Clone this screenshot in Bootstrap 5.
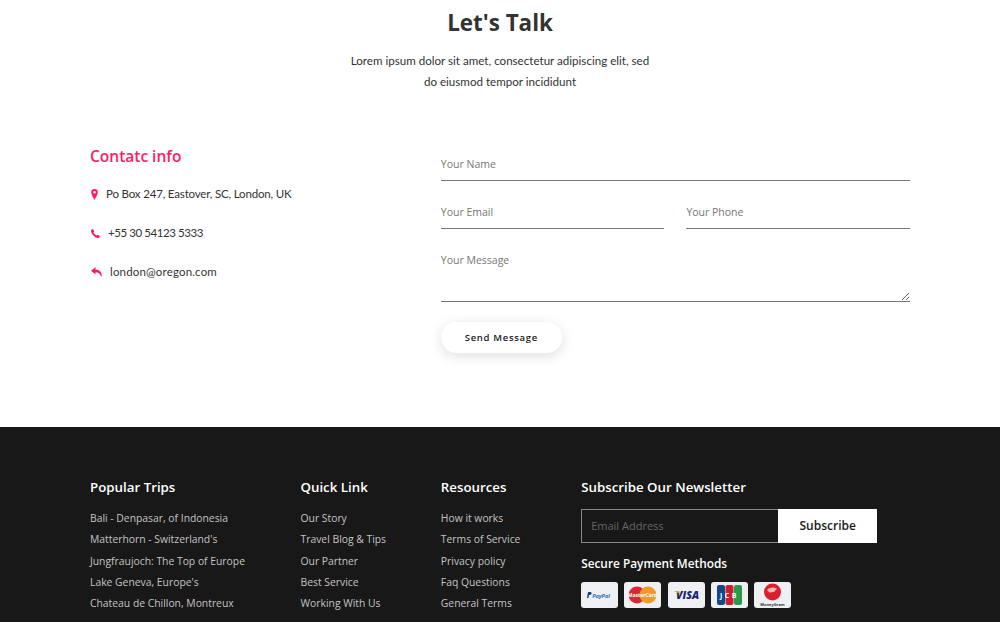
<!DOCTYPE html>
<html lang="en">
<head>
  <meta charset="UTF-8" />
  <title>Let's Talk</title>
  <link href="https://cdn.jsdelivr.net/npm/bootstrap@5.3.3/dist/css/bootstrap.min.css" rel="stylesheet" />
  <script src="https://cdn.jsdelivr.net/npm/bootstrap@5.3.3/dist/js/bootstrap.bundle.min.js"></script>
  <style>
    html, body { height: 622px; overflow: hidden; }
    body { font-family: "Open Sans", "Liberation Sans", sans-serif; color: #333; background: #fff; }
    .wrap-main { width: 842px; margin: 0 auto; padding: 0 11px; }
    .wrap-main .row { --bs-gutter-x: 22px; }
    .talk-head { padding-top: 6px; height: 147px; text-align: center; }
    .talk-head h2 { font-size: 22.4px; font-weight: 700; line-height: 34px; margin: 0 0 11px; color: #333; }
    .talk-head p { font-family: Lato, sans-serif; font-size: 11.6px; line-height: 20.6px; width: 305px; margin: 0 auto; color: #333; }
    .contact-zone { height: 280px; }
    .contact-title { font-size: 15.5px; font-weight: 600; color: #ff1a66; line-height: 18px; margin: 0 0 20px; }
    .contact-line { display: flex; align-items: center; padding-left: 1px; font-family: Lato, sans-serif; font-size: 11.5px; line-height: 18px; height: 18px; margin-bottom: 21px; color: #333; }
    .contact-line svg { flex: none; fill: #ff1a66; }
    .addr-text { letter-spacing: -.17px; }
    .phone-num { letter-spacing: -.42px; }
    .mail-text { letter-spacing: .17px; }
    .line-field { display: block; width: 100%; border: 0; border-bottom: 1px solid #777; border-radius: 0; padding: 0; height: 34px; background: transparent; font-size: 10.5px; color: #333; outline: 0; }
    .line-field::placeholder { color: #777; }
    textarea.line-field { height: 59px; padding-top: 7px; line-height: 20px; }
    .input-box { height: 48px; }
    .send-btn { width: 121px; height: 31px; margin-top: 20px; padding: 8px 0 6px; border: 0; border-radius: 16px; background: #fff; box-shadow: 0 3px 14px rgba(0,0,0,.13); font-size: 9.5px; font-weight: 600; letter-spacing: .7px; color: #222; }
    .foot-zone { height: 195px; background: #181818; padding-top: 50px; }
    .foot-title { font-size: 13.3px; font-weight: 600; color: #fff; line-height: 20px; margin: 0 0 11px; }
    .foot-links { list-style: none; margin: 0; padding: 0; }
    .foot-links li { font-size: 10.35px; line-height: 21.3px; color: #c4c4c4; white-space: nowrap; }
    .news-form { display: flex; width: 296px; height: 34px; margin-top: 12px; }
    .news-form input { width: 197px; border: 1px solid #888; border-right: 0; background: #181818; padding: 0 9px; font-size: 11px; outline: 0; color: #fff; }
    .news-form input::placeholder { color: #666; }
    .news-form button { width: 99px; border: 0; background: #fff; color: #181818; font-size: 12px; font-weight: 600; }
    .pay-title { font-size: 11.85px; font-weight: 600; color: #fff; line-height: 18px; margin: 11px 0 10px; }
    .pay-row { gap: 6.3px; }
    .pay-card { width: 37px; height: 26px; background: #eef0f4; border-radius: 3px; display: block; }
  </style>
</head>
<body>

<section class="talk-head">
  <h2>Let's Talk</h2>
  <p>Lorem ipsum dolor sit amet, consectetur adipiscing elit, sed do eiusmod tempor incididunt</p>
</section>

<section class="contact-zone">
  <div class="wrap-main">
    <div class="row">
      <div class="col-5">
        <h5 class="contact-title">Contatc info</h5>
        <div class="contact-line">
          <svg width="7" height="11" viewBox="0 0 12 20" class="me-2"><path fill-rule="evenodd" d="M6 0a6 6 0 0 0-6 6c0 4 6 14 6 14s6-10 6-14a6 6 0 0 0-6-6zm0 3.6a2.4 2.4 0 1 1 0 4.8 2.4 2.4 0 0 1 0-4.8z"/></svg>
          <span class="addr-text">Po Box 247, Eastover, SC, London, UK</span>
        </div>
        <div class="contact-line">
          <svg width="9" height="9" viewBox="0 0 20 20" class="me-2"><path d="M4.5 0 7.5 5.5 5.5 8c1.4 3 3.5 5 6.5 6.5l2.5-2 5.5 3-1.5 3.5c-.6 1-2 1-3 1C8 19 1 12 0 4.5c0-1 .2-2 1-2.8z"/></svg>
          <span class="phone-num">+55 30 54123 5333</span>
        </div>
        <div class="contact-line">
          <svg width="11" height="10" viewBox="0 0 22 20" class="me-2"><path d="M9 0 0 7.5 9 15v-4.5c5.5 0 8.5 1.5 10 6.5.6 1 1.4 2 2 3 1.5-7-1.5-14.5-12-15z"/></svg>
          <span class="mail-text">london@oregon.com</span>
        </div>
      </div>
      <div class="col-7">
        <form>
          <div class="input-box"><input class="line-field" type="text" placeholder="Your Name" /></div>
          <div class="row">
            <div class="col-6 input-box"><input class="line-field" type="text" placeholder="Your Email" /></div>
            <div class="col-6 input-box"><input class="line-field" type="text" placeholder="Your Phone" /></div>
          </div>
          <textarea class="line-field" placeholder="Your Message"></textarea>
          <button type="button" class="btn send-btn">Send Message</button>
        </form>
      </div>
    </div>
  </div>
</section>

<footer class="foot-zone">
  <div class="wrap-main">
    <div class="row">
      <div class="col-3">
        <h6 class="foot-title">Popular Trips</h6>
        <ul class="foot-links">
          <li>Bali - Denpasar, of Indonesia</li>
          <li>Matterhorn - Switzerland's</li>
          <li>Jungfraujoch: The Top of Europe</li>
          <li>Lake Geneva, Europe's</li>
          <li>Chateau de Chillon, Montreux</li>
        </ul>
      </div>
      <div class="col-2">
        <h6 class="foot-title">Quick Link</h6>
        <ul class="foot-links">
          <li>Our Story</li>
          <li>Travel Blog &amp; Tips</li>
          <li>Our Partner</li>
          <li>Best Service</li>
          <li>Working With Us</li>
        </ul>
      </div>
      <div class="col-2">
        <h6 class="foot-title">Resources</h6>
        <ul class="foot-links">
          <li>How it works</li>
          <li>Terms of Service</li>
          <li>Privacy policy</li>
          <li>Faq Questions</li>
          <li>General Terms</li>
        </ul>
      </div>
      <div class="col-5">
        <h6 class="foot-title">Subscribe Our Newsletter</h6>
        <div class="news-form">
          <input type="text" placeholder="Email Address" />
          <button type="button">Subscribe</button>
        </div>
        <h6 class="pay-title">Secure Payment Methods</h6>
        <div class="d-flex pay-row">
          <svg class="pay-card" viewBox="0 0 37 26"><text x="20" y="15.5" text-anchor="middle" font-family="Open Sans" font-size="5.5" font-weight="700" font-style="italic" fill="#2a6fb5">PayPal</text><path d="M7 10h2.5c1.500 0 1.500 3-.5 3H8l-.5 3H6z" fill="#1c3f80"/></svg>
          <svg class="pay-card" viewBox="0 0 37 26"><circle cx="13" cy="13" r="8.5" fill="#dc2535"/><circle cx="24" cy="13" r="8.5" fill="#f39a26"/><text x="18.5" y="15" text-anchor="middle" font-family="Open Sans" font-size="5" font-weight="700" fill="#fff">MasterCard</text></svg>
          <svg class="pay-card" viewBox="0 0 37 26"><text x="19.5" y="17" text-anchor="middle" font-family="Open Sans" font-size="10.5" font-weight="800" font-style="italic" fill="#1a2470">VISA</text><path d="M6 9h5l1.5 3z" fill="#e9a22b"/></svg>
          <svg class="pay-card" viewBox="0 0 37 26"><rect x="6" y="3" width="8" height="20" rx="2" fill="#12478c"/><rect x="14.5" y="3" width="8" height="20" rx="2" fill="#c8202f"/><rect x="23" y="3" width="8" height="20" rx="2" fill="#2a9a48"/><text x="18.5" y="16" text-anchor="middle" font-family="Open Sans" font-size="7" font-weight="700" fill="#fff" letter-spacing="2.5">JCB</text></svg>
          <svg class="pay-card" viewBox="0 0 37 26"><circle cx="18.5" cy="10" r="8.5" fill="#d8202a"/><path d="M13 8c3-3 7-3 10-1-2 1-2 3-4 3s-3 2-6-2z" fill="#f6b5b5"/><text x="18.5" y="24" text-anchor="middle" font-family="Open Sans" font-size="4" font-weight="700" fill="#333">MoneyGram</text></svg>
        </div>
      </div>
    </div>
  </div>
</footer>

</body>
</html>
